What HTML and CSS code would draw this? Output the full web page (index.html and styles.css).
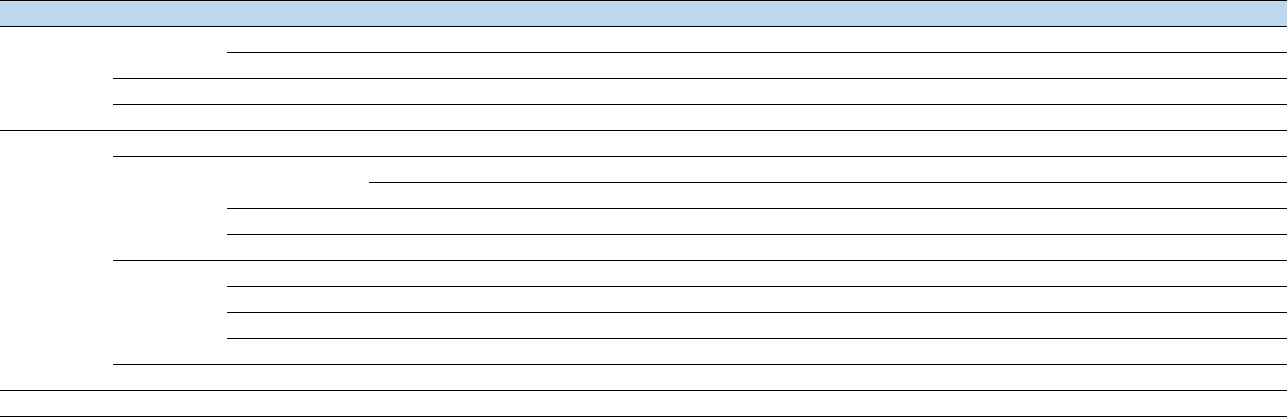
FILE: index.html
```html
<!DOCTYPE html>
<html lang="en">
<head>
<meta charset="utf-8">
<title>Table</title>
<link rel="stylesheet" href="styles.css">
</head>
<body>
<table class="grid">
  <colgroup>
    <col class="col-a">
    <col class="col-b">
    <col class="col-c">
    <col class="col-d">
  </colgroup>
  <thead>
    <tr><th></th><th></th><th></th><th></th></tr>
  </thead>
  <tbody>
    <tr><td rowspan="4"></td><td rowspan="2"></td><td></td><td></td></tr>
    <tr><td></td><td></td></tr>
    <tr><td></td><td></td><td></td></tr>
    <tr><td></td><td></td><td></td></tr>
    <tr><td rowspan="10"></td><td></td><td></td><td></td></tr>
    <tr><td rowspan="4"></td><td rowspan="2"></td><td></td></tr>
    <tr><td></td></tr>
    <tr><td></td><td></td></tr>
    <tr><td></td><td></td></tr>
    <tr><td rowspan="4"></td><td></td><td></td></tr>
    <tr><td></td><td></td></tr>
    <tr><td></td><td></td></tr>
    <tr><td></td><td></td></tr>
    <tr><td></td><td></td><td></td></tr>
    <tr><td></td><td></td><td></td><td></td></tr>
  </tbody>
</table>
</body>
</html>
```

FILE: styles.css
```css
html, body {
  margin: 0;
  padding: 0;
  background: #ffffff;
  font-family: "Liberation Sans", Arial, sans-serif;
  font-size: 14px;
}

.grid {
  width: 1287px;
  table-layout: fixed;
  border-collapse: separate;
  border-spacing: 0;
}

.col-a { width: 113px; }
.col-b { width: 114px; }
.col-c { width: 142px; }
.col-d { width: 918px; }

.grid th,
.grid td {
  padding: 0;
  height: 25px;
  border-bottom: 1px solid #000000;
}

.grid th {
  background: #bdd7ee;
  border-top: 1px solid #000000;
}
```
